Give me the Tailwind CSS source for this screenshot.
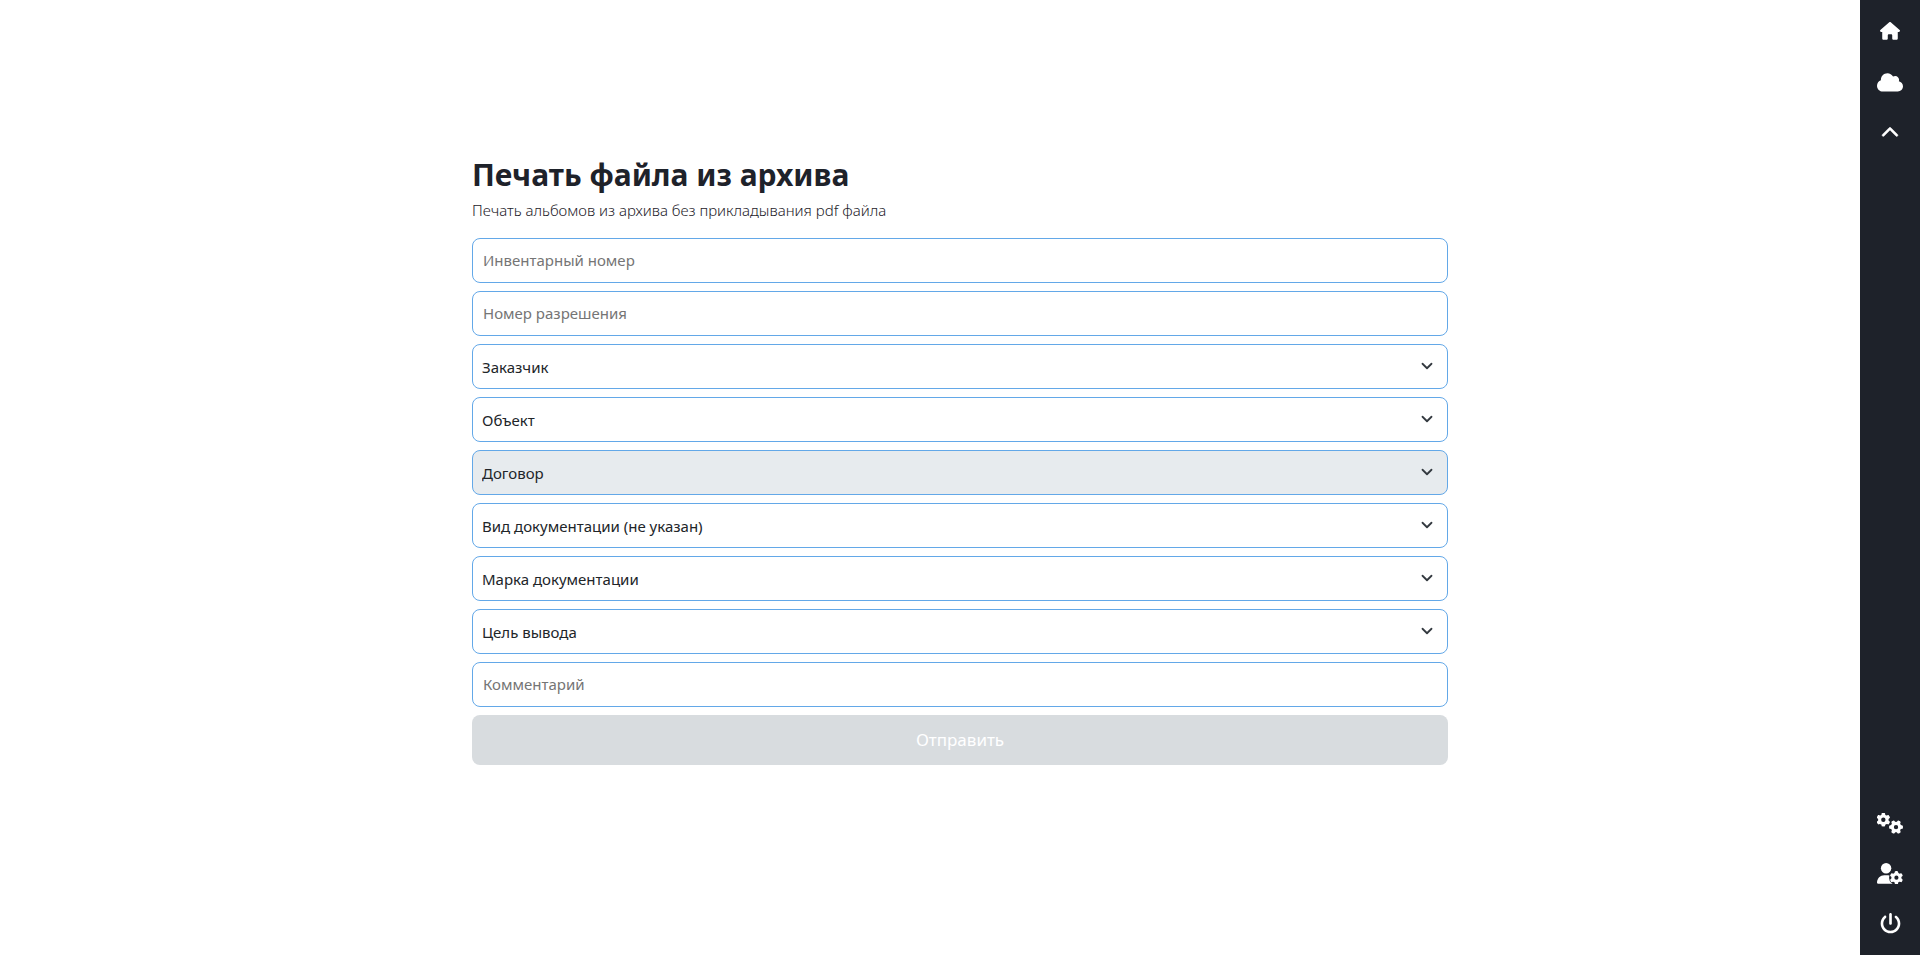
<!DOCTYPE html>
<html lang="ru">
<head>
<meta charset="utf-8">
<meta name="viewport" content="width=device-width, initial-scale=1">
<title>Печать файла из архива</title>
<script src="https://cdn.jsdelivr.net/npm/@tailwindcss/browser@4"></script>
</head>
<body class="bg-white font-['Noto_Sans','Open_Sans',sans-serif] text-[#1e222a]">
<svg class="hidden" aria-hidden="true">
  <symbol id="gear" viewBox="0 0 512 512"><path d="M495.9 166.6c3.2 8.7 .5 18.4-6.4 24.6l-43.3 39.4c1.1 8.3 1.7 16.8 1.7 25.4s-.6 17.1-1.7 25.4l43.3 39.4c6.9 6.2 9.6 15.9 6.4 24.6c-4.4 11.9-9.7 23.3-15.8 34.3l-4.7 8.1c-6.6 11-14 21.4-22.1 31.2c-5.9 7.2-15.7 9.6-24.5 6.8l-55.7-17.7c-13.4 10.3-28.2 18.9-44 25.4l-12.5 57.1c-2 9.1-9 16.3-18.2 17.8c-13.8 2.3-28 3.5-42.5 3.5s-28.7-1.2-42.5-3.5c-9.2-1.5-16.2-8.7-18.2-17.8l-12.5-57.1c-15.8-6.5-30.6-15.1-44-25.4L83.1 425.9c-8.8 2.8-18.6 .3-24.5-6.8c-8.1-9.8-15.5-20.2-22.1-31.2l-4.7-8.1c-6.1-11-11.4-22.4-15.8-34.3c-3.2-8.7-.5-18.4 6.4-24.6l43.3-39.4C64.6 273.1 64 264.6 64 256s.6-17.1 1.7-25.4L22.4 191.2c-6.9-6.2-9.6-15.9-6.4-24.6c4.4-11.9 9.7-23.3 15.8-34.3l4.7-8.1c6.6-11 14-21.4 22.1-31.2c5.9-7.2 15.7-9.6 24.5-6.8l55.7 17.7c13.4-10.3 28.2-18.9 44-25.4l12.5-57.1c2-9.1 9-16.3 18.2-17.8C227.3 1.2 241.5 0 256 0s28.7 1.2 42.5 3.5c9.2 1.5 16.2 8.7 18.2 17.8l12.5 57.1c15.8 6.5 30.6 15.1 44 25.4l55.7-17.7c8.8-2.8 18.6-.3 24.5 6.8c8.1 9.8 15.5 20.2 22.1 31.2l4.7 8.1c6.1 11 11.4 22.4 15.8 34.3zM256 336a80 80 0 1 0 0-160 80 80 0 1 0 0 160z"/></symbol>
  <symbol id="caret" viewBox="0 0 16 16"><path fill="none" stroke="#343a40" stroke-linecap="round" stroke-linejoin="round" stroke-width="2.4" d="m2 5 6 6 6-6"/></symbol>
</svg>

<main class="flex min-h-screen flex-col items-center justify-center px-20 pb-[37px]">
  <form class="flex w-full max-w-[976px] flex-col gap-2">
    <header class="mb-2">
      <h1 class="text-[30px] leading-[42px] font-bold">Печать файла из архива</h1>
      <p class="mt-[2px] text-[15px] leading-6 font-light">Печать альбомов из архива без прикладывания pdf файла</p>
    </header>
    <input type="text" aria-label="Инвентарный номер" placeholder="Инвентарный номер" class="h-[45px] w-full rounded-lg border border-[#63a8e8] bg-white px-[10px] text-[15px] placeholder:text-[#757575]">
    <input type="text" aria-label="Номер разрешения" placeholder="Номер разрешения" class="h-[45px] w-full rounded-lg border border-[#63a8e8] bg-white px-[10px] text-[15px] placeholder:text-[#757575]">
    <div class="grid items-center">
      <select aria-label="Заказчик" class="col-start-1 row-start-1 h-[45px] w-full appearance-none rounded-lg border border-[#63a8e8] bg-white px-[9px] pt-[2px] text-[15px] text-[#212529]"><option>Заказчик</option></select>
      <svg class="pointer-events-none col-start-1 row-start-1 mr-[15px] size-3 justify-self-end"><use href="#caret"/></svg>
    </div>
    <div class="grid items-center">
      <select aria-label="Объект" class="col-start-1 row-start-1 h-[45px] w-full appearance-none rounded-lg border border-[#63a8e8] bg-white px-[9px] pt-[2px] text-[15px] text-[#212529]"><option>Объект</option></select>
      <svg class="pointer-events-none col-start-1 row-start-1 mr-[15px] size-3 justify-self-end"><use href="#caret"/></svg>
    </div>
    <div class="grid items-center">
      <select disabled aria-label="Договор" class="col-start-1 row-start-1 h-[45px] w-full appearance-none rounded-lg border border-[#63a8e8] bg-[#e7ebee] px-[9px] pt-[2px] text-[15px] text-[#212529] opacity-100"><option>Договор</option></select>
      <svg class="pointer-events-none col-start-1 row-start-1 mr-[15px] size-3 justify-self-end"><use href="#caret"/></svg>
    </div>
    <div class="grid items-center">
      <select aria-label="Вид документации" class="col-start-1 row-start-1 h-[45px] w-full appearance-none rounded-lg border border-[#63a8e8] bg-white px-[9px] pt-[2px] text-[15px] text-[#212529]"><option>Вид документации (не указан)</option></select>
      <svg class="pointer-events-none col-start-1 row-start-1 mr-[15px] size-3 justify-self-end"><use href="#caret"/></svg>
    </div>
    <div class="grid items-center">
      <select aria-label="Марка документации" class="col-start-1 row-start-1 h-[45px] w-full appearance-none rounded-lg border border-[#63a8e8] bg-white px-[9px] pt-[2px] text-[15px] text-[#212529]"><option>Марка документации</option></select>
      <svg class="pointer-events-none col-start-1 row-start-1 mr-[15px] size-3 justify-self-end"><use href="#caret"/></svg>
    </div>
    <div class="grid items-center">
      <select aria-label="Цель вывода" class="col-start-1 row-start-1 h-[45px] w-full appearance-none rounded-lg border border-[#63a8e8] bg-white px-[9px] pt-[2px] text-[15px] text-[#212529]"><option>Цель вывода</option></select>
      <svg class="pointer-events-none col-start-1 row-start-1 mr-[15px] size-3 justify-self-end"><use href="#caret"/></svg>
    </div>
    <input type="text" aria-label="Комментарий" placeholder="Комментарий" class="h-[45px] w-full rounded-lg border border-[#63a8e8] bg-white px-[10px] text-[15px] placeholder:text-[#757575]">
    <button type="submit" disabled class="h-[50px] w-full rounded-lg bg-[#d8dcdf] text-[17px] text-white">Отправить</button>
  </form>
</main>

<nav class="fixed inset-y-0 right-0 flex w-[60px] flex-col items-center justify-between bg-[#1e222a] pt-[21px] pb-[21px] text-white" aria-label="Меню">
  <div class="flex flex-col items-center gap-[30px]">
    <a href="#" aria-label="Главная" class="flex h-5 items-center"><svg class="w-5" viewBox="0 0 576 512" fill="currentColor"><path d="M575.8 255.5c0 18-15 32.1-32 32.1l-32 0 .7 160.2c0 2.7-.2 5.4-.5 8.1l0 16.2c0 22.1-17.9 40-40 40l-16 0c-1.1 0-2.2 0-3.3-.1c-1.4 .1-2.8 .1-4.2 .1L416 512l-24 0c-22.1 0-40-17.9-40-40l0-24 0-64c0-17.7-14.3-32-32-32l-64 0c-17.7 0-32 14.3-32 32l0 64 0 24c0 22.1-17.9 40-40 40l-24 0-31.9 0c-1.5 0-3-.1-4.5-.2c-1.2 .1-2.4 .2-3.6 .2l-16 0c-22.1 0-40-17.9-40-40l0-112c0-.9 0-1.9 .1-2.8l0-69.7-32 0c-18 0-32-14-32-32.1c0-9 3-17 10-24L266.4 8c7-7 15-8 22-8s15 2 21 7L564.8 231.5c8 7 12 15 11 24z"/></svg></a>
    <a href="#" aria-label="Облако" class="flex h-[22px] items-center"><svg class="w-[26px]" viewBox="0 0 640 512" fill="currentColor"><path d="M0 336c0 79.5 64.5 144 144 144l368 0c70.7 0 128-57.3 128-128c0-61.9-44-113.6-102.4-125.4c4.1-10.7 6.4-22.4 6.4-34.6c0-53-43-96-96-96c-19.7 0-38.1 6-53.3 16.2C367 64.2 315.3 32 256 32C167.6 32 96 103.6 96 192c0 2.7 .1 5.4 .2 8.1C40.2 219.8 0 273.2 0 336z"/></svg></a>
    <button type="button" aria-label="Свернуть" class="flex h-5 items-center"><svg class="w-[18px]" viewBox="0 0 512 512" fill="currentColor" stroke="currentColor" stroke-width="16"><path d="M233.4 105.4c12.5-12.5 32.8-12.5 45.3 0l192 192c12.5 12.5 12.5 32.8 0 45.3s-32.8 12.5-45.3 0L256 173.3 86.6 342.6c-12.5 12.5-32.8 12.5-45.3 0s-12.5-32.8 0-45.3l192-192z"/></svg></button>
  </div>
  <div class="flex flex-col items-center gap-[29px]">
    <a href="#" aria-label="Настройки" class="flex"><svg class="w-[26px]" viewBox="0 0 640 512" fill="currentColor"><use href="#gear" width="512" height="512" transform="translate(156 166) scale(.67) translate(-256 -256)"/><use href="#gear" width="512" height="512" transform="translate(468 346) rotate(90) scale(.67) translate(-256 -256)"/></svg></a>
    <a href="#" aria-label="Профиль" class="flex"><svg class="w-[26px]" viewBox="0 0 640 512" fill="currentColor"><circle cx="224" cy="128" r="128"/><path d="M178 304h92c98 0 178 80 178 178 0 17-13 30-30 30H30c-17 0-30-13-30-30 0-98 80-178 178-178z"/><circle cx="478" cy="362" r="180" fill="#1e222a"/><use href="#gear" width="512" height="512" transform="translate(478 362) scale(.64) translate(-256 -256)"/></svg></a>
    <button type="button" aria-label="Выход" class="flex"><svg class="w-[21px]" viewBox="0 0 512 512" fill="currentColor"><path d="M288 32c0-17.7-14.3-32-32-32s-32 14.3-32 32V256c0 17.7 14.3 32 32 32s32-14.3 32-32V32zM143.5 120.6c13.6-11.3 15.4-31.5 4.1-45.1s-31.5-15.4-45.1-4.1C49.7 115.4 16 181.8 16 256c0 132.5 107.5 240 240 240s240-107.5 240-240c0-74.2-33.8-140.6-86.6-184.6c-13.6-11.3-33.8-9.4-45.1 4.1s-9.4 33.8 4.1 45.1c38.9 32.3 63.5 81 63.5 135.4c0 97.2-78.8 176-176 176s-176-78.8-176-176c0-54.4 24.7-103.1 63.5-135.4z"/></svg></button>
  </div>
</nav>
</body>
</html>
